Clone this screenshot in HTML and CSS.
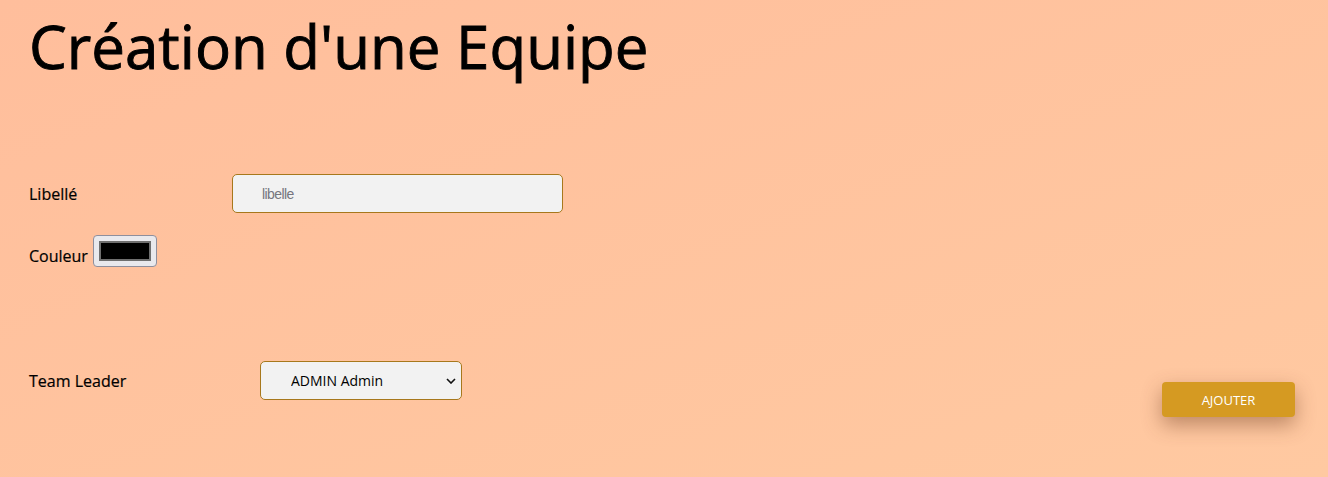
FILE: index.html
```html
<!DOCTYPE html>
<html lang="fr">
<head>
<meta charset="utf-8">
<title>Création d'une Equipe</title>
<link rel="stylesheet" href="styles.css">
</head>
<body>
<main class="page">
  <h1 class="title">Création d'une Equipe</h1>
  <form class="form">
    <div class="row row-libelle">
      <label class="label label-wide" for="libelle">Libellé</label>
      <input class="text-input" id="libelle" type="text" placeholder="libelle">
    </div>
    <div class="row row-couleur">
      <label class="label" for="couleur">Couleur</label>
      <input class="color-input" id="couleur" type="color" value="#000000">
    </div>
    <div class="row row-bottom">
      <div class="leader">
        <label class="label label-leader" for="leader">Team Leader</label>
        <select class="select" id="leader">
          <option>ADMIN Admin</option>
        </select>
      </div>
      <button class="btn" type="button">AJOUTER</button>
    </div>
  </form>
</main>
</body>
</html>
```

FILE: styles.css
```css
html, body {
  margin: 0;
  height: 100%;
}
body {
  background: linear-gradient(to bottom right, #ffbe9c, #ffc9a1);
  font-family: "Open Sans", "Noto Sans", sans-serif;
  color: #000;
  overflow: hidden;
}
.page {
  padding: 0 33px 0 28px;
}
.title {
  margin: 0;
  padding-top: 6px;
  padding-left: 1px;
  font-weight: 400;
  font-size: 60px;
  line-height: 80px;
  letter-spacing: 0;
  -webkit-text-stroke: 0.9px #000;
}
.form {
  margin-top: 88px;
}
.row {
  display: flex;
  align-items: center;
}
.label {
  font-size: 16px;
  line-height: 22px;
  padding-left: 1px;
  -webkit-text-stroke: 0.2px #000;
}
.label-wide {
  width: 203px;
}
.text-input {
  box-sizing: border-box;
  width: 331px;
  height: 39px;
  padding: 0 0 0 29px;
  background: #f2f2f2;
  border: 1px solid #a7781c;
  border-radius: 5px;
  font-family: "Liberation Sans", sans-serif;
  font-size: 14px;
  letter-spacing: -0.6px;
  outline: none;
}
.text-input::placeholder {
  color: #76767e;
}
.row-couleur {
  margin-top: 22px;
  align-items: flex-end;
}
.color-input {
  box-sizing: border-box;
  width: 64px;
  height: 32px;
  margin: 0 0 0 5px;
  padding: 5px 5px;
  background: #e9e9ed;
  border: 1px solid #8f8f9d;
  border-radius: 4px;
}
.color-input::-webkit-color-swatch-wrapper {
  padding: 0;
}
.color-input::-webkit-color-swatch {
  border: 2px solid #6f6f6f;
  border-radius: 0;
}
.row-bottom {
  margin-top: 94px;
  justify-content: space-between;
  align-items: flex-start;
}
.leader {
  display: flex;
  align-items: center;
}
.label-leader {
  width: 231px;
}
.select {
  -webkit-appearance: none;
  appearance: none;
  box-sizing: border-box;
  width: 202px;
  height: 39px;
  padding: 0 4px 0 30px;
  background: #f2f2f2 url("data:image/svg+xml;utf8,<svg xmlns='http://www.w3.org/2000/svg' width='10' height='6' viewBox='0 0 10 6'><path d='M1 1l4 4 4-4' fill='none' stroke='%23111' stroke-width='1.6'/></svg>") no-repeat right 5px center;
  border: 1px solid #a7781c;
  border-radius: 5px;
  font-family: "Open Sans", "Noto Sans", sans-serif;
  font-size: 14px;
  color: #000;
  outline: none;
}
.btn {
  margin-top: 21px;
  width: 133px;
  height: 35px;
  background: #d59a22;
  color: #fff;
  border: none;
  border-radius: 4px;
  font-family: "Open Sans", "Noto Sans", sans-serif;
  font-size: 13px;
  box-shadow: 0 8px 20px rgba(110, 60, 30, 0.45);
}
```
